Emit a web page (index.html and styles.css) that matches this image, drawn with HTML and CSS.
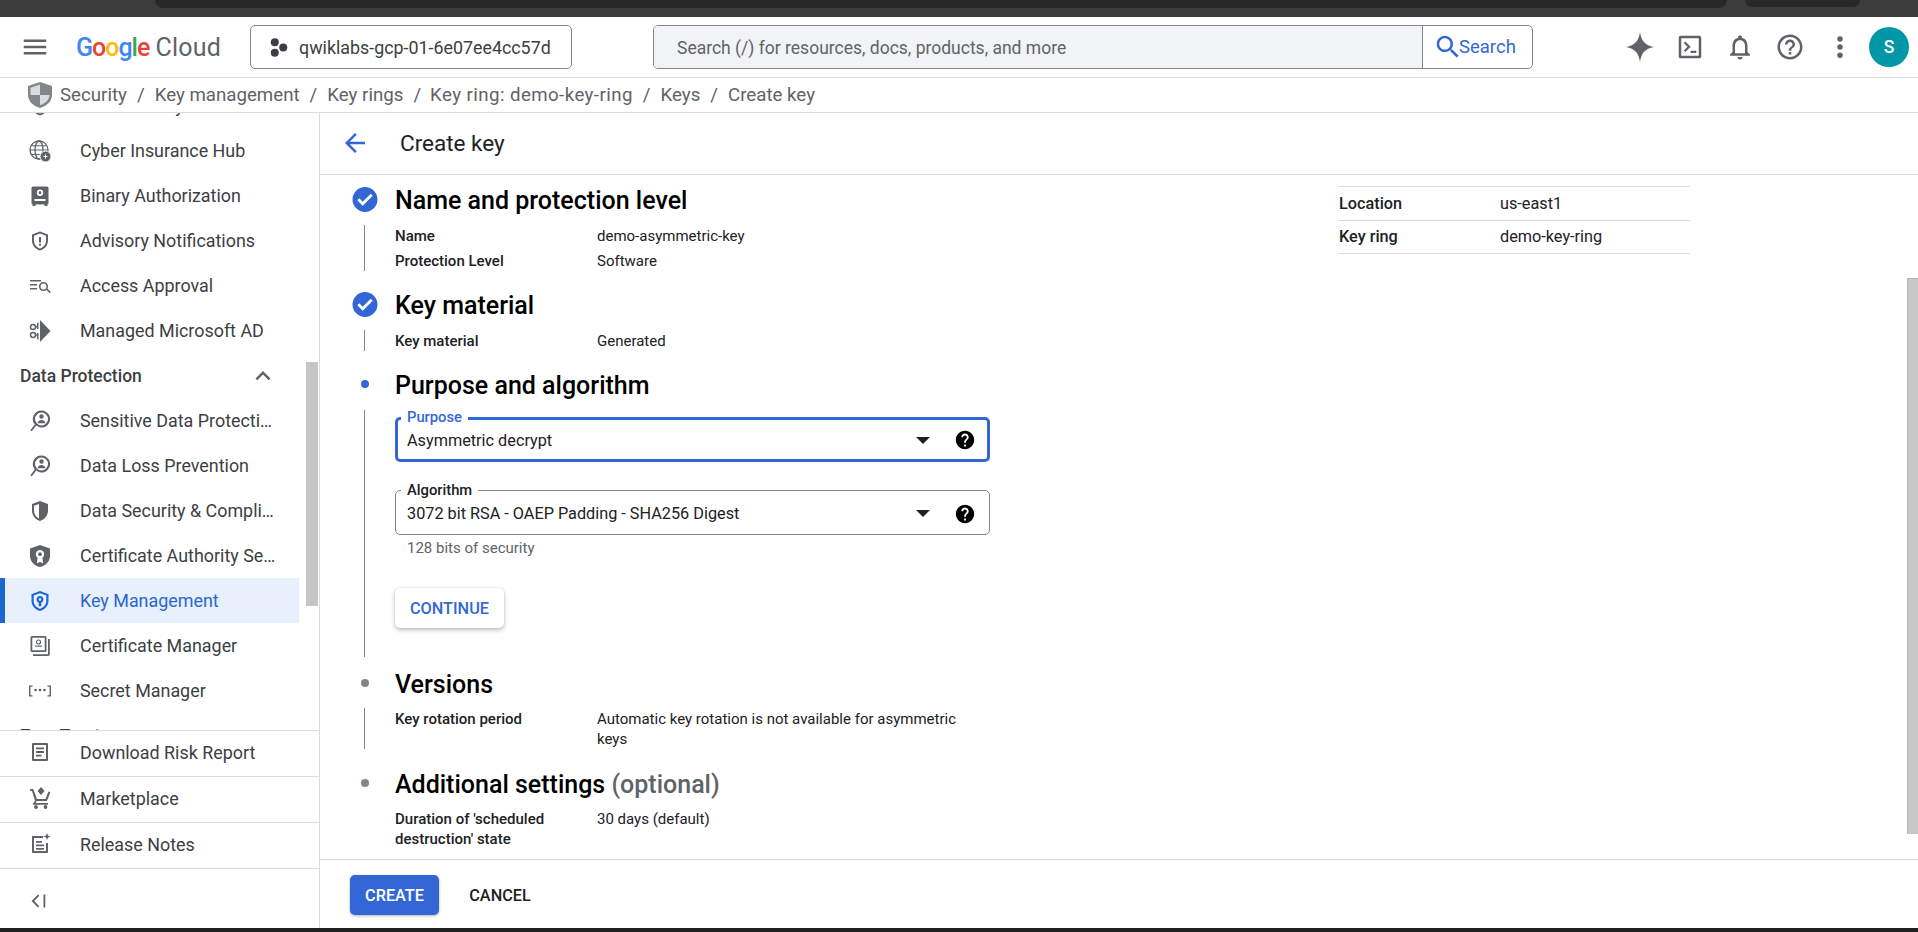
FILE: index.html
```html
<!DOCTYPE html>
<html lang="en">
<head>
  <meta charset="UTF-8">
  <title>Create key - Key Management</title>
  <link rel="stylesheet" href="styles.css">
</head>
<body>
  <svg class="sprite" width="0" height="0">
    <symbol id="i-menu" viewBox="0 0 24 24"><path d="M3 18h18v-2H3v2zm0-5h18v-2H3v2zm0-7v2h18V6H3z"/></symbol>
    <symbol id="i-back" viewBox="0 0 24 24"><path d="M20 11H7.83l5.59-5.59L12 4l-8 8 8 8 1.41-1.41L7.83 13H20v-2z"/></symbol>
    <symbol id="i-check" viewBox="0 0 24 24"><path d="M12 0a12 12 0 1 0 0 24 12 12 0 0 0 0-24zm-2.2 18L4.6 12.800l1.900-1.900 3.300 3.300 7.700-7.700 1.900 1.900z"/></symbol>
    <symbol id="i-help" viewBox="0 0 24 24"><path d="M12 2C6.480 2 2 6.480 2 12s4.480 10 10 10 10-4.480 10-10S17.520 2 12 2zm1 17h-2v-2h2v2zm2.070-7.750l-.9.920C13.450 12.900 13 13.500 13 15h-2v-.5c0-1.100.450-2.100 1.170-2.830l1.240-1.260c.370-.360.590-.860.590-1.410 0-1.100-.9-2-2-2s-2 .9-2 2H8c0-2.210 1.790-4 4-4s4 1.790 4 4c0 .880-.360 1.680-.930 2.250z"/></symbol>
    <symbol id="i-help-o" viewBox="0 0 24 24"><path d="M11 18h2v-2h-2v2zm1-16C6.480 2 2 6.480 2 12s4.480 10 10 10 10-4.480 10-10S17.520 2 12 2zm0 18c-4.410 0-8-3.590-8-8s3.590-8 8-8 8 3.590 8 8-3.590 8-8 8zm0-14c-2.210 0-4 1.790-4 4h2c0-1.100.9-2 2-2s2 .9 2 2c0 2-3 1.750-3 5h2c0-2.250 3-2.500 3-5 0-2.210-1.790-4-4-4z"/></symbol>
    <symbol id="i-bell" viewBox="0 0 24 24"><path d="M12 22c1.100 0 2-.9 2-2h-4c0 1.100.9 2 2 2zm6-6v-5c0-3.070-1.630-5.640-4.500-6.320V4c0-.830-.670-1.500-1.500-1.500s-1.500.670-1.500 1.500v.680C7.640 5.360 6 7.920 6 11v5l-2 2v1h16v-1l-2-2zm-2 1H8v-6c0-2.480 1.510-4.500 4-4.500s4 2.020 4 4.500v6z"/></symbol>
    <symbol id="i-search" viewBox="0 0 24 24"><path d="M15.500 14h-.790l-.280-.270C15.410 12.590 16 11.110 16 9.500 16 5.910 13.090 3 9.500 3S3 5.910 3 9.500 5.910 16 9.500 16c1.610 0 3.090-.590 4.230-1.570l.270.280v.790l5 4.990L20.490 19l-4.990-5zm-6 0C7.010 14 5 11.990 5 9.500S7.010 5 9.500 5 14 7.010 14 9.500 11.990 14 9.500 14z"/></symbol>
    <symbol id="i-up" viewBox="0 0 24 24"><path d="M12 8l-6 6 1.410 1.410L12 10.830l4.590 4.580L18 14z"/></symbol>
    <symbol id="i-spark" viewBox="0 0 28 30"><path d="M14 0c1.200 8.800 5 13.200 14 15-9 1.800-12.800 6.200-14 15-1.200-8.800-5-13.200-14-15 9-1.800 12.800-6.200 14-15z"/></symbol>
    <symbol id="i-term" viewBox="0 0 24 24"><path d="M4.500 3h15A1.500 1.500 0 0 1 21 4.500v15a1.500 1.500 0 0 1-1.500 1.500h-15A1.500 1.500 0 0 1 3 19.500v-15A1.500 1.500 0 0 1 4.500 3zM5 5v14h14V5zm2 3.700l1.300-1.200 4.200 4.300-4.200 4.200L7 14.700l3-2.900zM12.500 15H17v1.700h-4.500z"/></symbol>
    <symbol id="i-dots" viewBox="0 0 24 24"><circle cx="12" cy="5.500" r="2.200"/><circle cx="12" cy="12" r="2.200"/><circle cx="12" cy="18.500" r="2.200"/></symbol>
    <symbol id="i-project" viewBox="0 0 18 18"><circle cx="5.500" cy="4" r="3.800"/><circle cx="13.500" cy="9" r="3.800"/><circle cx="5.500" cy="14" r="3.800"/></symbol>
    <symbol id="i-globe" viewBox="0 0 24 24"><circle cx="11" cy="11" r="9" fill="none" stroke="currentColor" stroke-width="1.300"/><path d="M2 10.400h18v1.200H2zM3.500 6.200h15v1.100h-15zM3.500 15h12v1.100h-12z"/><ellipse cx="11" cy="11" rx="4" ry="9" fill="none" stroke="currentColor" stroke-width="1.300"/><circle cx="17.500" cy="17.500" r="5.500" stroke="#fff" stroke-width="1"/><path d="M15.500 17h4v1h-4zM17 15.500h1v4h-1z" fill="#fff"/></symbol>
    <symbol id="i-binary" viewBox="0 0 24 24"><path d="M5 2.500h14A1.500 1.500 0 0 1 20.500 4v15a1.500 1.500 0 0 1-1 1.400V22h-3v-1.500h-9V22h-3v-1.600a1.500 1.500 0 0 1-1-1.400V4A1.500 1.500 0 0 1 5 2.500zM12 5.500a3.200 3.200 0 1 0 0 6.400 3.200 3.200 0 0 0 0-6.400zm0 1.800a1.400 1.400 0 1 1 0 2.800 1.400 1.400 0 0 1 0-2.800zM6.500 15v2h11v-2z" fill-rule="evenodd"/></symbol>
    <symbol id="i-advisory" viewBox="0 0 24 24"><path d="M12 2.500l8 3v6c0 5-3.300 8.700-8 10-4.700-1.300-8-5-8-10v-6zm0 2.100L6 6.800v4.700c0 3.900 2.500 6.900 6 8 3.500-1.100 6-4.100 6-8V6.800zM11 8h2v5.500h-2zm0 6.800h2v2h-2z"/></symbol>
    <symbol id="i-access" viewBox="0 0 24 24"><path d="M2 6h11v1.500H2zM2 10h7v1.500H2zM2 14h7v1.500H2z"/><circle cx="15.500" cy="12.500" r="3.800" fill="none" stroke="currentColor" stroke-width="1.600"/><path d="M18 15.500l1.200-1.100 3.600 3.700-1.100 1.100z"/></symbol>
    <symbol id="i-ad" viewBox="0 0 24 24"><path d="M12 1l10.500 11L12 23z"/><circle cx="5" cy="8" r="2.500" fill="none" stroke="currentColor" stroke-width="1.500"/><circle cx="5" cy="16" r="2.500" fill="none" stroke="currentColor" stroke-width="1.500"/><path d="M7 7h3v1.500H7zM7 15.300h3v1.500H7zM9 4.500L10.500 3v7H9zM9 14h1.500v7L9 19.500z"/></symbol>
    <symbol id="i-dlp" viewBox="0 0 24 24"><path d="M13.500 1.500a8.500 8.500 0 1 1-5.300 15.100l-4.400 5.700-1.500-1.100 4.500-5.800A8.500 8.500 0 0 1 13.500 1.500zm0 2a6.500 6.500 0 1 0 0 13 6.500 6.500 0 0 0 0-13zm0 1.800a2.200 2.200 0 1 1 0 4.400 2.200 2.200 0 0 1 0-4.400zm-4 9c.2-2 2-3.300 4-3.300s3.800 1.300 4 3.300z"/></symbol>
    <symbol id="i-halfshield" viewBox="0 0 24 24"><path d="M12 2l8 3v6.500c0 5-3.400 9.100-8 10.500-4.600-1.400-8-5.500-8-10.500V5zm-1 2.900L6 6.800v4.700c0 3.700 2.100 6.800 5 8.100z"/></symbol>
    <symbol id="i-authority" viewBox="0 0 24 24"><path d="M12 1l10 3.600v7.400c0 5.500-4.300 9.800-10 11-5.700-1.200-10-5.500-10-11V4.600zm0 5a4.200 4.200 0 0 0-2.400 7.600L9 19.500l3-1.800 3 1.800-.6-5.900A4.200 4.200 0 0 0 12 6zm0 2.300a1.900 1.900 0 1 1 0 3.800 1.900 1.900 0 0 1 0-3.800z" fill-rule="evenodd"/></symbol>
    <symbol id="i-key" viewBox="0 0 24 24"><path d="M12 2l8.500 3.200v6.600c0 5-3.600 8.900-8.500 10.200-4.900-1.300-8.500-5.200-8.500-10.200V5.200zm0 2.200L5.700 6.600v5.200c0 3.800 2.700 6.900 6.300 8 3.600-1.100 6.300-4.200 6.300-8V6.600zm0 2.800a3.500 3.500 0 0 1 1.300 6.700v3.500h-2.600v-3.500A3.500 3.500 0 0 1 12 7zm0 2.200a1.300 1.300 0 1 0 0 2.600 1.300 1.300 0 0 0 0-2.600z"/></symbol>
    <symbol id="i-certman" viewBox="0 0 24 24"><path d="M4 2h13a1.500 1.500 0 0 1 1.500 1.500v13A1.500 1.500 0 0 1 17 18H4a1.500 1.500 0 0 1-1.500-1.500v-13A1.500 1.500 0 0 1 4 2zm.3 1.800v12.400h12.400V3.800z"/><circle cx="10.500" cy="8" r="2" fill="none" stroke="currentColor" stroke-width="1.200"/><path d="M7 11.500h7v1.200H7z"/><path d="M20 5h1.800v15.300A1.700 1.700 0 0 1 20.100 22H5v-1.800h15z"/></symbol>
    <symbol id="i-secret" viewBox="0 0 24 24"><path d="M1 6.500h3.500v1.300H2.400v8.400h2.100v1.300H1zM23 6.500h-3.500v1.300h2.100v8.400h-2.100v1.300H23z"/><circle cx="7.500" cy="11" r="1.300"/><circle cx="12" cy="11" r="1.300"/><circle cx="16.500" cy="11" r="1.300"/></symbol>
    <symbol id="i-doc" viewBox="0 0 24 24"><path d="M5 3h14a1 1 0 0 1 1 1v16a1 1 0 0 1-1 1H5a1 1 0 0 1-1-1V4a1 1 0 0 1 1-1zm1 2v14h12V5zm2 2.500h8v1.800H8zm0 3.600h8v1.800H8zm0 3.600h5.500v1.800H8z"/></symbol>
    <symbol id="i-cart" viewBox="0 0 24 24"><path d="M13 1l3.500 4-3.500 4-3.500-4zM2 3h3.200l.8 2 2.900 8h8.600l3-7.500 1.900.7-3.500 8.800H8.600l-1.100 2h12.500v1.800H4.500L7 14.400 3.900 4.800H2z"/><circle cx="8" cy="21" r="1.900"/><circle cx="17.500" cy="21" r="1.900"/></symbol>
    <symbol id="i-notes" viewBox="0 0 24 24"><path d="M4 4h11v2H6v13h12v-8h2v9a1 1 0 0 1-1 1H5a1 1 0 0 1-1-1zM8 9h6v1.800H8zm0 3.500h8v1.800H8zm0 3.500h8v1.800H8z"/><path d="M19 1l1 2.500L22.500 4.500 20 5.500 19 8l-1-2.500-2.500-1L18 3.500z"/></symbol>
    <symbol id="i-collapse" viewBox="0 0 24 24"><path d="M10 5.500l1.300 1.300L6.200 12l5.100 5.200-1.300 1.300L3.500 12zM15.500 5.500h1.800v13h-1.800z"/></symbol>
  </svg>

  <div class="browser-strip">
    <div class="strip-tab"></div>
    <div class="strip-pill"></div>
  </div>

  <header class="topbar">
    <svg class="menu-btn"><use href="#i-menu"/></svg>
    <div class="logo"><span class="logo-google"><span class="g-blue">G</span><span class="g-red">o</span><span class="g-yellow">o</span><span class="g-blue">g</span><span class="g-green">l</span><span class="g-red">e</span></span> <span class="logo-cloud">Cloud</span></div>
    <div class="project-picker">
      <svg class="project-icon"><use href="#i-project"/></svg>
      <span>qwiklabs-gcp-01-6e07ee4cc57d</span>
    </div>
    <div class="searchbox">
      <div class="search-input">Search (/) for resources, docs, products, and more</div>
      <div class="search-btn"><svg><use href="#i-search"/></svg><span>Search</span></div>
    </div>
    <div class="top-icons">
      <svg class="spark"><use href="#i-spark"/></svg>
      <svg><use href="#i-term"/></svg>
      <svg><use href="#i-bell"/></svg>
      <svg><use href="#i-help-o"/></svg>
      <svg><use href="#i-dots"/></svg>
    </div>
    <div class="avatar">S</div>
  </header>

  <nav class="crumbs">
    <svg class="crumb-shield" viewBox="0 0 24 26">
      <path d="M12 0l12 4v9c0 6-5 11-12 13C5 24 0 19 0 13V4z" fill="#80868b"/>
      <path d="M12 2.500L2.500 5.700V13H12zM12 13v10.300c5.300-1.700 9.500-5.800 9.500-10.300z" fill="#dadce0"/>
    </svg>
    <span>Security</span><i>/</i><span>Key management</span><i>/</i><span>Key rings</span><i>/</i><span class="crumb-wide">Key ring: demo-key-ring</span><i>/</i><span>Keys</span><i>/</i><span>Create key</span>
  </nav>

  <div class="layout">
    <aside class="sidebar">
      <div class="nav-scroll">
        <a class="nav-item"><svg><use href="#i-advisory"/></svg>Web Security Scanner</a>
        <a class="nav-item"><svg><use href="#i-globe"/></svg>Cyber Insurance Hub</a>
        <a class="nav-item"><svg><use href="#i-binary"/></svg>Binary Authorization</a>
        <a class="nav-item"><svg><use href="#i-advisory"/></svg>Advisory Notifications</a>
        <a class="nav-item"><svg><use href="#i-access"/></svg>Access Approval</a>
        <a class="nav-item"><svg><use href="#i-ad"/></svg>Managed Microsoft AD</a>
        <div class="nav-group">Data Protection<svg><use href="#i-up"/></svg></div>
        <a class="nav-item"><svg><use href="#i-dlp"/></svg><span>Sensitive Data Protection</span></a>
        <a class="nav-item"><svg><use href="#i-dlp"/></svg>Data Loss Prevention</a>
        <a class="nav-item"><svg><use href="#i-halfshield"/></svg><span>Data Security &amp; Compliance</span></a>
        <a class="nav-item"><svg><use href="#i-authority"/></svg><span>Certificate Authority Service</span></a>
        <a class="nav-item active"><svg><use href="#i-key"/></svg>Key Management</a>
        <a class="nav-item"><svg><use href="#i-certman"/></svg>Certificate Manager</a>
        <a class="nav-item"><svg><use href="#i-secret"/></svg>Secret Manager</a>
        <div class="nav-group">Zero Trust</div>
      </div>
      <div class="nav-foot">
        <a class="foot-item"><svg><use href="#i-doc"/></svg>Download Risk Report</a>
        <a class="foot-item"><svg><use href="#i-cart"/></svg>Marketplace</a>
        <a class="foot-item"><svg><use href="#i-notes"/></svg>Release Notes</a>
        <a class="foot-collapse"><svg><use href="#i-collapse"/></svg></a>
      </div>
      <div class="nav-thumb"></div>
    </aside>

    <main class="content">
      <div class="page-head">
        <svg><use href="#i-back"/></svg>
        <h1>Create key</h1>
      </div>

      <div class="page-body">
        <div class="steps">
          <div class="step-head"><svg class="mark-check"><use href="#i-check"/></svg><h2>Name and protection level</h2></div>
          <div class="step-body">
            <div class="row"><b>Name</b><span>demo-asymmetric-key</span></div>
            <div class="row"><b>Protection Level</b><span>Software</span></div>
          </div>

          <div class="step-head"><svg class="mark-check"><use href="#i-check"/></svg><h2>Key material</h2></div>
          <div class="step-body">
            <div class="row"><b>Key material</b><span>Generated</span></div>
          </div>

          <div class="step-head"><div class="mark-dot current"></div><h2>Purpose and algorithm</h2></div>
          <div class="step-body form-body">
            <div class="field focused">
              <label>Purpose</label>
              <span>Asymmetric decrypt</span>
              <div class="caret"></div>
              <svg><use href="#i-help"/></svg>
            </div>
            <div class="field">
              <label>Algorithm</label>
              <span>3072 bit RSA - OAEP Padding - SHA256 Digest</span>
              <div class="caret"></div>
              <svg><use href="#i-help"/></svg>
            </div>
            <div class="hint">128 bits of security</div>
            <button class="btn-continue">CONTINUE</button>
          </div>

          <div class="step-head short"><div class="mark-dot"></div><h2>Versions</h2></div>
          <div class="step-body tight">
            <div class="row"><b>Key rotation period</b><span>Automatic key rotation is not available for asymmetric keys</span></div>
          </div>

          <div class="step-head last"><div class="mark-dot"></div><h2>Additional settings <em>(optional)</em></h2></div>
          <div class="step-body tight no-line">
            <div class="row"><b>Duration of 'scheduled destruction' state</b><span>30 days (default)</span></div>
          </div>
        </div>

        <table class="info">
          <tr><th>Location</th><td>us-east1</td></tr>
          <tr><th>Key ring</th><td>demo-key-ring</td></tr>
        </table>
        <div class="page-thumb"></div>
      </div>

      <div class="page-foot">
        <button class="btn-create">CREATE</button>
        <button class="btn-cancel">CANCEL</button>
      </div>
    </main>
  </div>
  <div class="bottom-edge"></div>
</body>
</html>
```

FILE: styles.css
```css
* { box-sizing: border-box; }

html, body {
  margin: 0;
  height: 932px;
  overflow: hidden;
  background: #fff;
  font-family: Roboto, "Liberation Sans", sans-serif;
  color: #202124;
}

svg { fill: currentColor; flex: none; }
.sprite { position: absolute; }

/* browser chrome left in the shot */
.browser-strip {
  height: 17px;
  background: #3c3c3c;
  display: flex;
  align-items: flex-start;
}
.strip-tab {
  height: 8px;
  width: 1572px;
  margin-left: 155px;
  background: #282828;
  border-radius: 0 0 14px 14px;
}
.strip-pill {
  height: 7px;
  width: 115px;
  margin-left: 18px;
  background: #282828;
  border-radius: 0 0 14px 14px;
}
.bottom-edge { height: 4px; background: #1f1f1f; }

/* top bar */
.topbar {
  height: 61px;
  border-bottom: 1px solid #dadce0;
  display: flex;
  align-items: center;
  color: #5f6368;
}
.menu-btn { width: 30px; height: 30px; margin-left: 20px; }
.logo {
  width: 174px;
  margin-left: 26px;
  font-size: 25px;
  white-space: nowrap;
}
.logo-google { letter-spacing: -1px; font-weight: 500; }
.g-blue { color: #4285f4; }
.g-red { color: #ea4335; }
.g-yellow { color: #fbbc04; }
.g-green { color: #34a853; }
.logo-cloud { color: #5f6368; letter-spacing: .2px; }

.project-picker {
  width: 322px;
  height: 44px;
  border: 1px solid #80868b;
  border-radius: 5px;
  display: flex;
  align-items: center;
  padding-left: 18px;
  gap: 11px;
  font-size: 17.850px;
  color: #3c4043;
}
.project-icon { width: 19px; height: 19px; }

.searchbox {
  width: 880px;
  height: 44px;
  margin-left: 81px;
  border: 1px solid #80868b;
  border-radius: 5px;
  display: flex;
  overflow: hidden;
}
.search-input {
  flex: 1;
  background: #f1f3f4;
  border-right: 1px solid #80868b;
  padding-left: 23px;
  padding-top: 1px;
  line-height: 42px;
  font-size: 17.500px;
  color: #5f6368;
}
.search-btn {
  width: 109px;
  display: flex;
  align-items: center;
  padding-left: 10px;
  color: #3367d6;
  font-size: 18.500px;
  font-weight: 400;
}
.search-btn svg { width: 30px; height: 30px; margin-right: -4px; }

.top-icons { display: flex; margin-left: 82px; }
.top-icons svg { width: 30px; height: 30px; margin: 0 10px; }
.top-icons .spark { width: 28px; margin: 0 11px; fill: #5f6368; }
.avatar {
  width: 40px;
  height: 40px;
  margin-left: 4px;
  border-radius: 50%;
  background: #0097a7;
  color: #fff;
  text-align: center;
  line-height: 40px;
  font-size: 17.500px;
  font-weight: 500;
}

/* breadcrumb */
.crumbs {
  height: 35px;
  border-bottom: 1px solid #dadce0;
  display: flex;
  align-items: center;
  padding-left: 28px;
  font-size: 18.700px;
  color: #5f6368;
}
.crumb-shield { width: 24px; height: 26px; margin-right: 8px; }
.crumbs i { font-style: normal; margin: 0 10px; }
.crumb-wide { letter-spacing: .42px; margin-left: -1px; }

/* page */
.layout { display: flex; height: 815px; }

.sidebar {
  position: relative;
  width: 320px;
  border-right: 1px solid #dadce0;
  display: flex;
  flex-direction: column;
}
.nav-scroll { height: 617px; overflow: hidden; }
.nav-scroll .nav-item:first-child { margin-top: -30px; }
.nav-item {
  height: 45px;
  margin-right: 20px;
  padding-left: 28px;
  display: flex;
  align-items: center;
  font-size: 17.900px;
  color: #3c4043;
  white-space: nowrap;
}
.nav-item svg { width: 24px; height: 24px; margin-right: 28px; color: #5f6368; }
.nav-item span {
  overflow: hidden;
  text-overflow: ellipsis;
  width: 197px;
}
.nav-item.active {
  background: #e8f0fe;
  border-left: 5px solid #1a67d2;
  padding-left: 23px;
  color: #2a66cf;
}
.nav-item.active svg { color: #1a67d2; }
.nav-group {
  height: 45px;
  padding: 0 46px 0 20px;
  display: flex;
  align-items: center;
  justify-content: space-between;
  font-size: 17.500px;
  font-weight: 500;
  color: #3c4043;
}
.nav-group svg { width: 30px; height: 30px; color: #5f6368; margin-right: -5px; }

.nav-foot { flex: 1; background: #fff; }
.foot-item {
  height: 46px;
  border-top: 1px solid #dadce0;
  padding: 0 0 3px 28px;
  display: flex;
  align-items: center;
  font-size: 17.900px;
  color: #3c4043;
}
.foot-item svg { width: 24px; height: 24px; margin-right: 28px; color: #5f6368; }
.foot-collapse {
  height: 60px;
  border-top: 1px solid #dadce0;
  padding: 4px 0 0 28px;
  display: flex;
  align-items: center;
  color: #5f6368;
}
.foot-collapse svg { width: 24px; height: 24px; }
.nav-thumb {
  position: absolute;
  left: 306px;
  top: 249px;
  width: 12px;
  height: 244px;
  background: #c6c6c6;
}

.content { flex: 1; display: flex; flex-direction: column; min-width: 0; }
.page-head {
  height: 62px;
  border-bottom: 1px solid #dadce0;
  padding: 0 0 1px 20px;
  display: flex;
  align-items: center;
}
.page-head svg { width: 30px; height: 30px; color: #3367d6; }
.page-head h1 {
  margin: 0 0 0 30px;
  font-size: 22.500px;
  font-weight: 400;
}

.page-body {
  position: relative;
  flex: 1;
  overflow: hidden;
  display: flex;
  padding: 9px 0 0 30px;
}
.steps { width: 640px; flex: none; }

.step-head {
  height: 30px;
  margin-top: 19px;
  display: flex;
  align-items: center;
}
.step-head:first-child { margin-top: 0; }
.step-head.short { margin-top: 11px; }
.step-head.last { margin-top: 20px; }
.step-head h2 {
  margin: 0 0 0 15px;
  padding-top: 2px;
  font-size: 25px;
  font-weight: 500;
  color: #000;
  white-space: nowrap;
}
.step-head em { font-style: normal; color: #5f6368; }
.mark-check { width: 30px; height: 25px; color: #3367d6; }
.mark-dot {
  width: 8px;
  height: 8px;
  margin: 0 11px;
  border-radius: 50%;
  background: #80868b;
}
.mark-dot.current { background: #3367d6; }

.step-body {
  margin: 11px 0 -1px 14px;
  padding: 1px 0 0 30px;
  border-left: 1px solid #80868b;
}
.step-body.tight { margin-top: 10px; }
.step-body.no-line { border-left-color: transparent; }
.form-body { margin-bottom: 0; padding-top: 7px; padding-bottom: 29px; }

.row {
  display: flex;
  font-size: 15px;
  line-height: 20px;
  margin-bottom: 5px;
}
.row:last-child { margin-bottom: 0; }
.row b { width: 202px; flex: none; padding-right: 20px; font-weight: 500; }
.row span { width: 362px; }

.field {
  position: relative;
  height: 45px;
  border: 1px solid #80868b;
  border-radius: 5px;
  display: flex;
  align-items: center;
  padding: 2px 0 0 11px;
  font-size: 16.250px;
  color: #202124;
}
.field.focused {
  height: 45px;
  border: 3px solid #3367d6;
  padding: 1px 0 0 9px;
  margin-bottom: 28px;
}
.field label {
  position: absolute;
  left: 5px;
  top: -10px;
  padding: 0 6px;
  background: #fff;
  font-size: 14.750px;
  line-height: 18px;
  font-weight: 500;
}
.field.focused label { left: 3px; top: -12px; color: #3367d6; }
.field span { flex: 1; }
.caret {
  width: 0;
  height: 0;
  border-left: 7px solid transparent;
  border-right: 7px solid transparent;
  border-top: 7px solid #202124;
  margin-right: 24px;
}
.field svg { width: 22px; height: 22px; margin-right: 13px; color: #000; }
.field.focused svg { margin-right: 11px; }

.hint {
  height: 20px;
  margin-top: 3px;
  padding-left: 12px;
  line-height: 20px;
  font-size: 15px;
  color: #5f6368;
}
.btn-continue {
  display: block;
  width: 109px;
  height: 40px;
  margin-top: 30px;
  border: 0;
  border-radius: 5px;
  background: #fff;
  box-shadow: 0 2px 4px rgba(60, 64, 67, .35), 0 0 2px rgba(60, 64, 67, .12);
  font: 500 16.250px Roboto, sans-serif;
  color: #3367d6;
}

.info {
  width: 351px;
  height: 68px;
  margin: 2px 0 0 349px;
  flex: none;
  border-collapse: collapse;
  font-size: 16.250px;
  align-self: flex-start;
}
.info tr { border-top: 1px solid #dadce0; border-bottom: 1px solid #dadce0; }
.info th { width: 161px; padding: 0; text-align: left; font-weight: 500; }
.info td { padding: 0; }

.page-thumb {
  position: absolute;
  right: 0;
  top: 103px;
  width: 11px;
  height: 556px;
  background: #c8c8c8;
  border-left: 1px solid #b4b4b4;
  border-top: 1px solid #b4b4b4;
}

.page-foot {
  height: 69px;
  border-top: 1px solid #dadce0;
  padding: 2px 0 0 30px;
  display: flex;
  align-items: center;
  gap: 17px;
}
.page-foot button {
  height: 40px;
  border: 0;
  border-radius: 5px;
  font: 500 16.250px Roboto, sans-serif;
}
.btn-create {
  width: 89px;
  background: #3367d6;
  color: #fff;
  box-shadow: 0 1px 3px rgba(60, 64, 67, .4);
}
.btn-cancel {
  width: 88px;
  background: #fff;
  color: #202124;
}
```
